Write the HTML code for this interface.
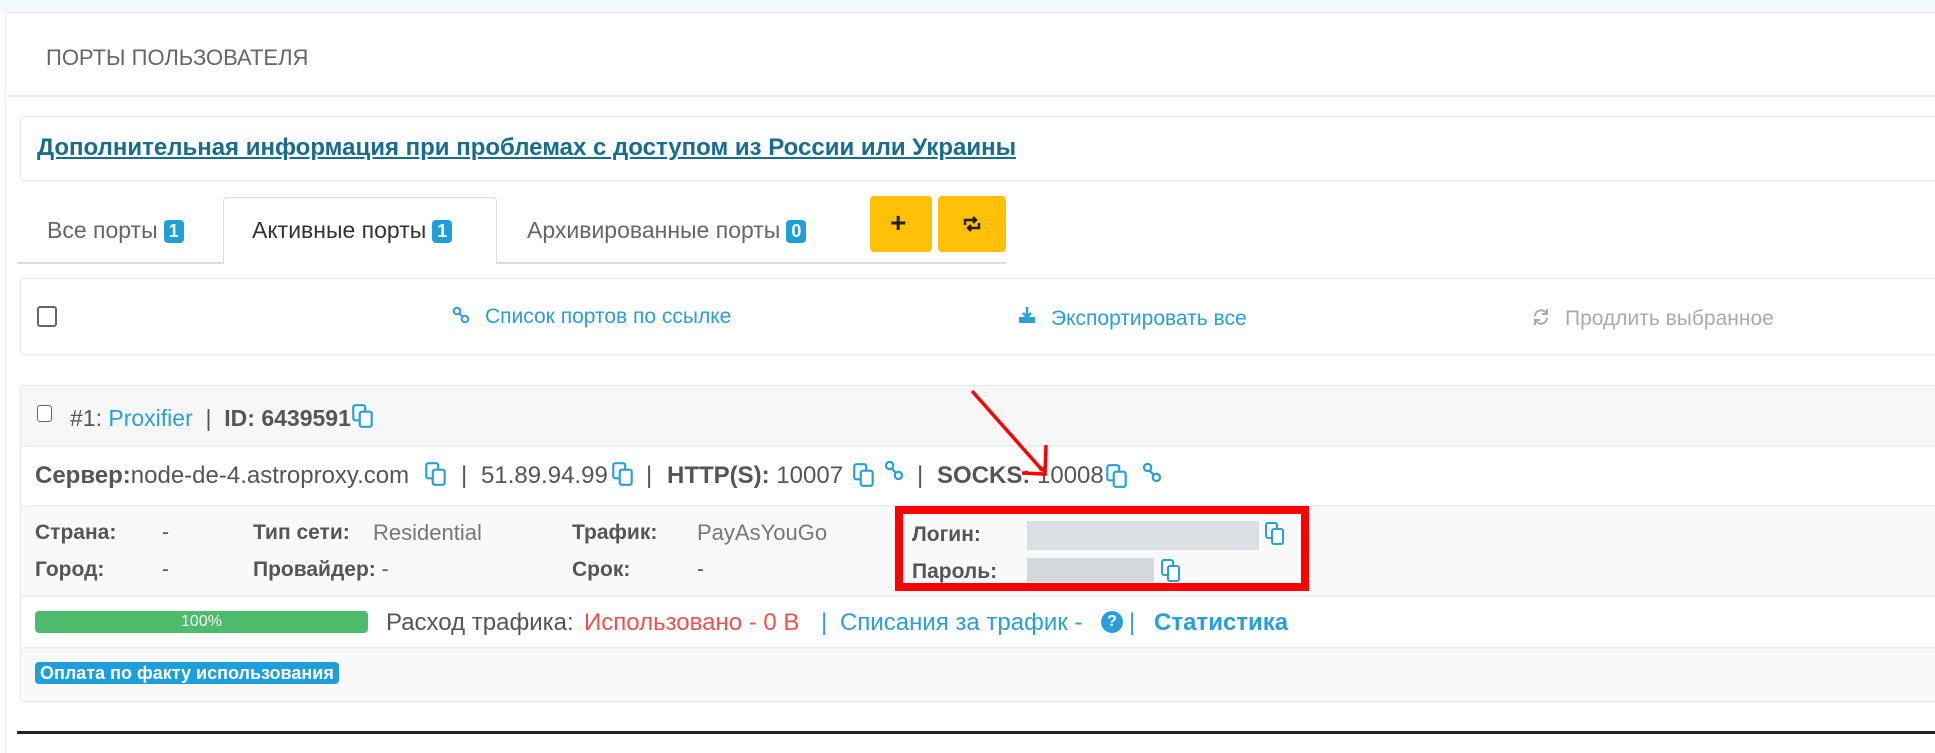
<!DOCTYPE html>
<html><head><meta charset="utf-8"><style>
*{margin:0;padding:0;box-sizing:border-box}
body{width:1935px;height:753px;background:#fff;font-family:"Liberation Sans","DejaVu Sans",sans-serif;position:relative;overflow:hidden;color:#555}
.a{position:absolute;white-space:nowrap;line-height:1}
.top{position:absolute;left:0;top:0;width:1935px;height:12px;background:#f2f9fd}
.card{position:absolute;left:5px;top:12px;width:1930px;height:741px;border-left:1px solid #e8eef2;border-top:1px solid #e8eef2;background:#fff}
.hr{position:absolute;height:2px;background:#eef1f4}
.badge{display:inline-block;background:#1e9fd9;color:#fff;font-size:18px;font-weight:bold;border-radius:4px;padding:2px 5px;line-height:19px;vertical-align:1px;margin-left:6px}
.blue{color:#2a9fd6}
b{color:#555}
.box{position:absolute;border:1px solid #e6e9ee;border-radius:3px;box-shadow:0 1px 2px rgba(0,0,0,.05)}
.cb{position:absolute;width:18px;height:18px;border:2px solid #666;border-radius:3px;background:#fff}
svg{position:absolute}
svg.i{position:static;display:inline-block;vertical-align:-3px}
.s{font-size:24px;top:464px}
.p{font-size:24px;top:611px}
</style></head><body>
<div class="top"></div>
<div class="card"></div>
<div class="a" style="left:46px;top:47px;font-size:22px;color:#666">ПОРТЫ ПОЛЬЗОВАТЕЛЯ</div>
<div class="hr" style="left:6px;top:95px;width:1929px"></div>

<div class="box" style="left:20px;top:116px;width:1920px;height:65px"></div>
<div class="a" style="left:37px;top:136px;font-size:24px;font-weight:bold;color:#186c8c;text-decoration:underline">Дополнительная информация при проблемах с доступом из России или Украины</div>

<div style="position:absolute;left:17px;top:262px;width:989px;height:2px;background:#ddd"></div>
<div style="position:absolute;left:223px;top:197px;width:274px;height:67px;border:1px solid #ddd;border-bottom:none;border-radius:4px 4px 0 0;background:#fff"></div>
<div class="a" style="left:47px;top:219px;font-size:23px;color:#666">Все порты<span class="badge">1</span></div>
<div class="a" style="left:252px;top:219px;font-size:23px;color:#333">Активные порты<span class="badge">1</span></div>
<div class="a" style="left:527px;top:219px;font-size:23px;color:#666">Архивированные порты<span class="badge">0</span></div>
<div style="position:absolute;left:870px;top:196px;width:62px;height:56px;background:#ffc107;border-radius:4px"></div>
<div style="position:absolute;left:938px;top:196px;width:68px;height:56px;background:#ffc107;border-radius:4px"></div>
<div class="a" style="left:890px;top:209px;font-size:28px;font-weight:bold;color:#222">+</div>
<svg style="left:962px;top:216px" width="20" height="16" viewBox="0 0 20 16"><path d="M3 9V4h11M11 1l3 3-3 3M17 7v5H6M9 15l-3-3 3-3" fill="none" stroke="#222" stroke-width="2.5"/></svg>

<div class="box" style="left:20px;top:278px;width:1920px;height:77px"></div>
<div class="cb" style="left:37px;top:306px;width:20px;height:21px"></div>
<svg style="left:452px;top:306px" width="18" height="18" viewBox="0 0 18 18"><circle cx="5" cy="5" r="3.3" fill="none" stroke="#2a9fd6" stroke-width="2"/><circle cx="13" cy="13" r="3.3" fill="none" stroke="#2a9fd6" stroke-width="2"/><path d="M7 7l4 4" stroke="#2a9fd6" stroke-width="2"/></svg>
<div class="a blue" style="left:485px;top:306px;font-size:21px">Список портов по ссылке</div>
<svg style="left:1018px;top:306px" width="18" height="18" viewBox="0 0 18 18"><path d="M9 1v10M5 7l4 4 4-4" fill="none" stroke="#2a9fd6" stroke-width="2.5"/><path d="M1 11v6h16v-6" fill="#2a9fd6"/></svg>
<div class="a blue" style="left:1051px;top:308px;font-size:21px">Экспортировать все</div>
<svg style="left:1532px;top:308px" width="18" height="18" viewBox="0 0 18 18"><path d="M3 8a6 6 0 0 1 11-3M15 10a6 6 0 0 1-11 3" fill="none" stroke="#aaa" stroke-width="2"/><path d="M15 1v5h-5M3 17v-5h5" fill="none" stroke="#aaa" stroke-width="2"/></svg>
<div class="a" style="left:1565px;top:308px;font-size:21px;color:#aaa">Продлить выбранное</div>

<div class="box" style="left:20px;top:385px;width:1920px;height:317px;background:#f9f9f9"></div>
<div style="position:absolute;left:21px;top:386px;width:1914px;height:59px;background:#f7f7f7"></div>
<div class="hr" style="left:21px;top:445px;width:1914px"></div>
<div style="position:absolute;left:21px;top:447px;width:1914px;height:58px;background:#fff"></div>
<div class="hr" style="left:21px;top:505px;width:1914px"></div>
<div class="hr" style="left:21px;top:595px;width:1914px"></div>
<div style="position:absolute;left:21px;top:597px;width:1914px;height:50px;background:#fff"></div>
<div class="hr" style="left:21px;top:647px;width:1914px"></div>

<div class="cb" style="left:37px;top:405px;width:15px;height:17px;border-width:1.5px"></div>
<div class="a" style="left:70px;top:403px;font-size:23px;color:#555">#1: <span class="blue">Proxifier</span> &nbsp;|&nbsp; <b>ID: 6439591</b><svg class="i" width="24" height="26" viewBox="0 0 22 24"><rect x="2" y="2" width="11" height="14" rx="2" fill="#fff" stroke="#2a9fd6" stroke-width="2"/><rect x="8" y="8" width="11" height="14" rx="2" fill="#fff" stroke="#2a9fd6" stroke-width="2"/></svg></div>

<div class="a s" style="left:35px"><b>Сервер:</b>node-de-4.astroproxy.com</div>
<svg style="left:424px;top:461px" width="24" height="26" viewBox="0 0 22 24"><rect x="2" y="2" width="11" height="14" rx="2" fill="#fff" stroke="#2a9fd6" stroke-width="2"/><rect x="8" y="8" width="11" height="14" rx="2" fill="#fff" stroke="#2a9fd6" stroke-width="2"/></svg>
<div class="a s" style="left:461px">|</div>
<div class="a s" style="left:481px">51.89.94.99</div>
<svg style="left:611px;top:461px" width="24" height="26" viewBox="0 0 22 24"><rect x="2" y="2" width="11" height="14" rx="2" fill="#fff" stroke="#2a9fd6" stroke-width="2"/><rect x="8" y="8" width="11" height="14" rx="2" fill="#fff" stroke="#2a9fd6" stroke-width="2"/></svg>
<div class="a s" style="left:646px">|</div>
<div class="a s" style="left:667px"><b>HTTP(S):</b> 10007</div>
<svg style="left:852px;top:462px" width="24" height="26" viewBox="0 0 22 24"><rect x="2" y="2" width="11" height="14" rx="2" fill="#fff" stroke="#2a9fd6" stroke-width="2"/><rect x="8" y="8" width="11" height="14" rx="2" fill="#fff" stroke="#2a9fd6" stroke-width="2"/></svg>
<svg style="left:884px;top:460px" width="20" height="22" viewBox="0 0 18 20"><circle cx="5" cy="5" r="3.3" fill="none" stroke="#2a9fd6" stroke-width="2"/><circle cx="13" cy="14" r="3.3" fill="none" stroke="#2a9fd6" stroke-width="2"/><path d="M7 8l4 4" stroke="#2a9fd6" stroke-width="2"/></svg>
<div class="a s" style="left:917px">|</div>
<div class="a s" style="left:937px"><b>SOCKS:</b> 10008</div>
<svg style="left:1105px;top:463px" width="24" height="26" viewBox="0 0 22 24"><rect x="2" y="2" width="11" height="14" rx="2" fill="#fff" stroke="#2a9fd6" stroke-width="2"/><rect x="8" y="8" width="11" height="14" rx="2" fill="#fff" stroke="#2a9fd6" stroke-width="2"/></svg>
<svg style="left:1142px;top:462px" width="20" height="22" viewBox="0 0 18 20"><circle cx="5" cy="5" r="3.3" fill="none" stroke="#2a9fd6" stroke-width="2"/><circle cx="13" cy="14" r="3.3" fill="none" stroke="#2a9fd6" stroke-width="2"/><path d="M7 8l4 4" stroke="#2a9fd6" stroke-width="2"/></svg>

<div class="a" style="left:35px;top:522px;font-size:21px;font-weight:bold">Страна:</div>
<div class="a" style="left:162px;top:522px;font-size:21px">-</div>
<div class="a" style="left:35px;top:559px;font-size:21px;font-weight:bold">Город:</div>
<div class="a" style="left:162px;top:559px;font-size:21px">-</div>
<div class="a" style="left:253px;top:522px;font-size:21px;font-weight:bold">Тип сети:</div>
<div class="a" style="left:373px;top:522px;font-size:22px;color:#777">Residential</div>
<div class="a" style="left:253px;top:559px;font-size:21px"><b>Провайдер:</b> -</div>
<div class="a" style="left:572px;top:522px;font-size:21px;font-weight:bold">Трафик:</div>
<div class="a" style="left:697px;top:522px;font-size:22px;color:#777">PayAsYouGo</div>
<div class="a" style="left:572px;top:559px;font-size:21px;font-weight:bold">Срок:</div>
<div class="a" style="left:697px;top:559px;font-size:21px">-</div>
<div class="a" style="left:912px;top:524px;font-size:21px;font-weight:bold">Логин:</div>
<div class="a" style="left:912px;top:561px;font-size:21px;font-weight:bold">Пароль:</div>
<div style="position:absolute;left:1027px;top:521px;width:232px;height:29px;background:#dcdfe3"></div>
<div style="position:absolute;left:1027px;top:558px;width:127px;height:24px;background:#d4d7dc"></div>
<svg style="left:1264px;top:521px" width="22" height="26" viewBox="0 0 22 26"><rect x="2" y="2" width="11" height="15" rx="2" fill="#fff" stroke="#2a9fd6" stroke-width="2"/><rect x="8" y="8" width="11" height="15" rx="2" fill="#fff" stroke="#2a9fd6" stroke-width="2"/></svg>
<svg style="left:1160px;top:558px" width="22" height="26" viewBox="0 0 22 26"><rect x="2" y="2" width="11" height="15" rx="2" fill="#fff" stroke="#2a9fd6" stroke-width="2"/><rect x="8" y="8" width="11" height="15" rx="2" fill="#fff" stroke="#2a9fd6" stroke-width="2"/></svg>
<div style="position:absolute;left:895px;top:506px;width:414px;height:85px;border:8px solid #f00"></div>

<div style="position:absolute;left:35px;top:611px;width:333px;height:22px;background:#4cbb6c;border-radius:4px;color:#fff;font-size:16px;text-align:center;line-height:22px">100%</div>
<div class="a p" style="left:386px">Расход трафика:</div>
<div class="a p" style="left:584px;color:#f05050">Использовано - 0 B</div>
<div class="a p blue" style="left:821px">|</div>
<div class="a p blue" style="left:840px">Списания за трафик -</div>
<div class="a" style="left:1101px;top:611px;width:22px;height:22px;border-radius:50%;background:#2a9fd6;color:#fff;font-size:16px;font-weight:bold;text-align:center;line-height:22px">?</div>
<div class="a p blue" style="left:1129px">|</div>
<div class="a p blue" style="left:1154px;font-weight:bold">Статистика</div>

<div class="a" style="left:35px;top:662px;height:22px;padding:0 5px;background:#1e9fd9;border-radius:4px;color:#fff;font-size:18px;font-weight:bold;line-height:22px">Оплата по факту использования</div>

<div style="position:absolute;left:17px;top:731px;width:1918px;height:3px;background:#222"></div>

<svg style="left:960px;top:385px" width="100" height="100" viewBox="0 0 100 100"><path d="M12 6L83 86" stroke="#f00" stroke-width="3.5" fill="none"/><path d="M86 60L85 89L62 88" stroke="#f00" stroke-width="3.5" fill="none"/></svg>
</body></html>
